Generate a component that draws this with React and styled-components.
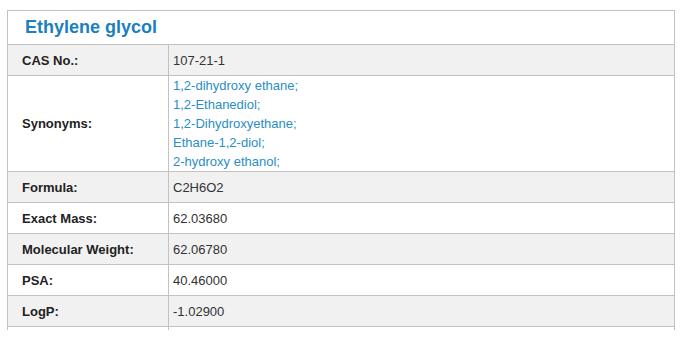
import React from 'react'
import styled, { createGlobalStyle } from 'styled-components'

const GlobalStyle = createGlobalStyle`
  body {
    margin: 0;
    background: #fff;
    font-family: "Liberation Sans", Arial, sans-serif;
  }
`

const Card = styled.div`
  box-sizing: border-box;
  width: 668px;
  margin: 10px 0 0 7px;
  border: 1px solid #c2c2c2;
  border-bottom: none;
`

const Title = styled.h2`
  margin: 0;
  height: 33px;
  line-height: 33px;
  padding-left: 17px;
  border-bottom: 1px solid #c2c2c2;
  font-size: 18px;
  font-weight: bold;
  color: #1b80c0;
`

const Row = styled.div`
  display: grid;
  grid-template-columns: 161px 1fr;
  min-height: ${p => (p.$stub ? '3px' : '30px')};
  border-bottom: ${p => (p.$stub ? 'none' : '1px solid #c2c2c2')};
  background: ${p => (p.$shade ? '#f1f1f1' : '#fff')};
  font-size: 13px;
`

const Label = styled.div`
  box-sizing: border-box;
  display: flex;
  align-items: center;
  padding-left: 14px;
  border-right: 1px solid #c2c2c2;
  font-weight: bold;
  color: #222;
`

const Value = styled.div`
  display: flex;
  flex-direction: column;
  justify-content: center;
  padding-left: 4px;
  color: #333;
`

const Synonym = styled.span`
  line-height: 19px;
  color: #2a8ec6;
`

const synonyms = [
  '1,2-dihydroxy ethane;',
  '1,2-Ethanediol;',
  '1,2-Dihydroxyethane;',
  'Ethane-1,2-diol;',
  '2-hydroxy ethanol;',
]

const props = [
  ['Formula:', 'C2H6O2'],
  ['Exact Mass:', '62.03680'],
  ['Molecular Weight:', '62.06780'],
  ['PSA:', '40.46000'],
  ['LogP:', '-1.02900'],
]

const App = () => {
  return (
    <>
      <GlobalStyle />
      <Card>
        <Title>Ethylene glycol</Title>
        <Row $shade>
          <Label>CAS No.:</Label>
          <Value>107-21-1</Value>
        </Row>
        <Row>
          <Label>Synonyms:</Label>
          <Value>
            {synonyms.map(s => (
              <Synonym key={s}>{s}</Synonym>
            ))}
          </Value>
        </Row>
        {props.map(([label, value], i) => (
          <Row key={label} $shade={i % 2 === 0}>
            <Label>{label}</Label>
            <Value>{value}</Value>
          </Row>
        ))}
        <Row $stub>
          <Label />
          <Value />
        </Row>
      </Card>
    </>
  )
}

export default App
